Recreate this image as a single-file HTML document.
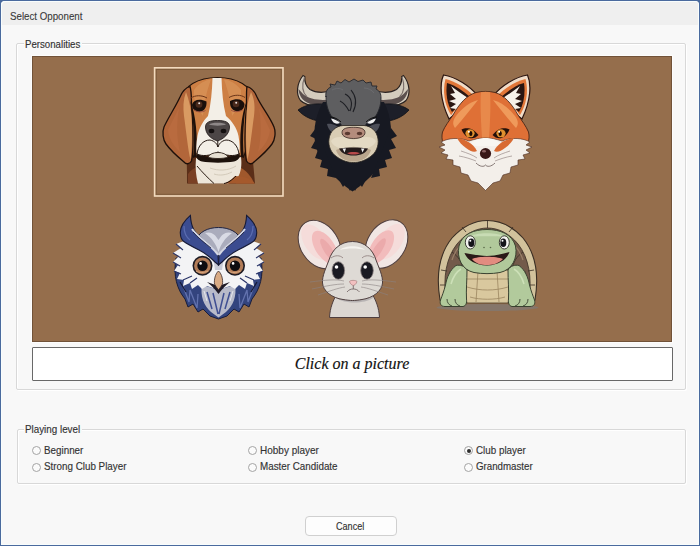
<!DOCTYPE html>
<html><head><meta charset="utf-8">
<style>
*{margin:0;padding:0;box-sizing:border-box}
html,body{width:700px;height:546px;overflow:hidden;background:#4a6a9e}
body{font-family:"Liberation Sans",sans-serif;position:relative}
.win{position:absolute;left:1px;top:1px;width:698px;height:544px;background:#f8f8f8;border-radius:4px 4px 0 0;overflow:hidden}
.title{position:absolute;left:0;top:0;width:698px;height:24px;background:#efefef}
.hl{position:absolute;left:0;top:0;width:698px;height:544px;border-radius:4px 4px 0 0;box-shadow:inset 1px 1px 0 #f8fdfd,inset -1px -1px 0 #f8fdfd}
.t{position:absolute;white-space:nowrap;color:#323232;-webkit-text-stroke:0.15px #323232;font-size:10.8px;line-height:13px;transform-origin:0 0;transform:scaleX(0.91)}
.gb{position:absolute;border:1px solid #d8d8d8;border-radius:2px;box-shadow:inset 1px 1px 0 #fff, 1px 1px 0 #fff}
.gl{position:absolute;background:#f8f8f8;height:10px;top:0}
.brown{position:absolute;left:32px;top:56px;width:640px;height:285.5px;background:#956e4c;box-shadow:inset 0 0 0 1px #715238,0 0 0 1px #fdfdfd}
.msg{position:absolute;left:31.5px;top:346.5px;width:641px;height:34px;background:#fff;border:1.2px solid #686868;border-radius:1px}
.msg span{position:absolute;left:0;right:0;top:7.3px;text-align:center;font-family:"Liberation Serif",serif;font-style:italic;font-size:16px;color:#111;-webkit-text-stroke:0.15px #111}
.radio{position:absolute;width:9px;height:9px;border:1px solid #a4a4a4;border-radius:50%;background:#fbfbfb}
.radio.on{border-color:#a0a0a0}
.radio.on::after{content:"";position:absolute;left:1.5px;top:1.5px;width:4px;height:4px;border-radius:50%;background:#2e2e2e}
.btn{position:absolute;left:305px;top:516px;width:92px;height:20px;border:1px solid #d0d0d0;border-radius:4px;background:#fdfdfd}
</style></head>
<body>
<div class="win">
  <div class="title"></div>
  <div class="hl"></div>
</div>
<div class="t" style="left:10px;top:10px;color:#383838;-webkit-text-stroke:0.1px #383838;transform:scaleX(0.9)">Select Opponent</div>

<div class="gb" style="left:16px;top:43px;width:670px;height:347px"></div>
<div class="gl" style="left:23.5px;top:38px;width:58.5px"></div>
<div class="t" style="left:25px;top:38px;transform:scaleX(0.895)">Personalities</div>
<div class="brown"></div>
<svg style="position:absolute;left:0;top:0" width="700" height="546" viewBox="0 0 700 546">
<g id="dog">
  <!-- neck back -->
  <path d="M186,150 C187,162 187,172 187,183.5 L255,183.5 C254,172 253,162 252,150 Z" fill="#5a2e18"/>
  <path d="M238,166 C246,170 252,177 254,183.5 L236,183.5 Z" fill="#a0582c"/>
  <path d="M188,174 C191,170 194,168 197,167 L198,183.5 L188,183.5 Z" fill="#7a4024"/>
  <!-- head dome -->
  <path d="M181,100 C183,86 198,77.5 217.5,77.5 C237,77.5 252,86 254,100 C254,120 250,140 244,156 L192,156 C186,140 181,120 181,100 Z" fill="#cd7f44" stroke="#22120a" stroke-width="1.1"/>
  <path d="M194,90 C199,83 206,80 211,79.5 C207,90 204,102 203,116 C198,110 193,100 194,90Z" fill="#dd9a60" opacity="0.55"/>
  <path d="M241,90 C236,83 229,80 224,79.5 C228,90 231,102 232,116 C237,110 242,100 241,90Z" fill="#dd9a60" opacity="0.55"/>
  <!-- ears -->
  <path d="M190,86.5 C185,88 182,92 180,97 C176,106 168,118 164,127 C162,132 163,140 166,144 C171,151 178,157 184,162 C186,164.5 189.5,164.5 191.5,161 C193.5,152 193.5,130 192,112 C191,102 192,92 190,86.5 Z" fill="#b2663a" stroke="#1e100a" stroke-width="1.3"/>
  <path d="M186,92 C189,100 191,108 191.5,118 C192.5,132 192,150 190.5,160 C188,150 186,130 184,116 C183,108 183,100 186,92Z" fill="#d99a62"/>
  <path d="M168,130 C172,122 176,114 179,108 C177,120 176,136 180,152 C174,146 169,140 168,130Z" fill="#c07248" opacity="0.45"/>
  <path d="M190,100 C193,115 195,138 193,158 L196,157 C198,138 196,115 190,100Z" fill="#1e100a"/>
  <path d="M247,86.5 C252,88 255,92 257,97 C261,106 270,117 274,127 C276,132 275,140 272,144 C267,151 260,157 254,162 C252,164.5 248.5,164.5 246.5,161 C244.5,152 244.5,130 246,112 C247,102 246,92 247,86.5 Z" fill="#b2663a" stroke="#1e100a" stroke-width="1.3"/>
  <path d="M251,92 C248,100 246.5,108 246.5,118 C245.5,132 246,150 247.5,160 C250,150 252,130 254,116 C255,108 255,100 251,92Z" fill="#d99a62"/>
  <path d="M270,130 C266,122 262,114 259,108 C261,120 262,136 258,152 C264,146 269,140 270,130Z" fill="#c07248" opacity="0.45"/>
  <path d="M247,100 C244,115 242,138 244,158 L241,157 C239,138 241,115 247,100Z" fill="#1e100a"/>
  <!-- chest -->
  <path d="M196,158 C206,161 230,161 241,157 C242,165 241,172 238,177 C235,181 231,183.5 226,183.5 L198,183.5 C196,176 195,168 196,158 Z" fill="#ede6da"/>
  <path d="M235,176 C244,176 252,179 255,183.5 L224,183.5 C229,182 232,179 235,176Z" fill="#a5592c"/>
  <path d="M236,176 C232,180 228,183 224,183.5" fill="none" stroke="#1e120c" stroke-width="1"/>
  <path d="M197,166 C202,172 208,178 214,183.5" fill="none" stroke="#2a1c14" stroke-width="1"/>
  <path d="M210,168 C218,171 228,171 236,166 M214,174 C220,176 226,175 232,172" fill="none" stroke="#cfc6b6" stroke-width="0.9"/>
  <!-- blaze/muzzle -->
  <path d="M212.5,78 L221.5,78 C222,92 223,104 226,116 C232,121 237,128 238.5,136 C240,144 240,150 239,155 L197,155 C196,150 196,144 197.5,136 C199,128 203,121 208,116 C211,104 212,92 212.5,78 Z" fill="#f3efe7"/>
  <!-- mouth band -->
  <path d="M196.5,153 C204,157 212,158.5 218,157.5 C225,158.5 232,157 239.5,153 C240.5,157 238.5,160.5 234,161.5 C226,163 210,163 202,161.5 C197.5,160.5 195.5,157 196.5,153Z" fill="#1c110b"/>
  <!-- jowls -->
  <path d="M197,154 C198,146 203,140 210,140 C215,141 217,144 218,147 C219,144 221,141 226,140 C233,140 238,146 239,154 C234,156.5 226,156 218,152 C210,156 202,156.5 197,154Z" fill="#f3efe7" stroke="#241812" stroke-width="1"/>
  <path d="M208,157 C211,151 225,151 228,157 C224,159 212,159 208,157Z" fill="#e6dfd2" stroke="#241812" stroke-width="0.8"/>
  <path d="M217.8,140 L217.8,147" stroke="#241812" stroke-width="1"/>
  <!-- nose -->
  <path d="M205.5,127 C205.5,122 210,120.5 217.5,120.5 C225,120.5 229.5,122 229.5,127 C229.5,134 223.5,139 217.5,141 C211,139 205.5,134 205.5,127 Z" fill="#4c4646" stroke="#1c1414" stroke-width="0.8"/>
  <path d="M209,124.5 C211,122 224,122 226,124.5 C222,126 213,126 209,124.5Z" fill="#8e8888"/>
  <ellipse cx="211.5" cy="131" rx="2.8" ry="2.2" fill="#141010"/>
  <ellipse cx="223.5" cy="131" rx="2.8" ry="2.2" fill="#141010"/>
  <!-- eyes -->
  <path d="M192,104.5 C193.5,99.5 200,98.5 206.5,101.5 C207,108 203.5,112 198.5,111.8 C194.5,111.5 192,108.5 192,104.5 Z" fill="#1a0f0b"/>
  <ellipse cx="199" cy="104.5" rx="3.4" ry="3.3" fill="#4a2a1c"/>
  <circle cx="199.2" cy="103.3" r="1" fill="#e8e0e0"/>
  <path d="M193.5,109.5 C197,112.5 202,112.5 205.5,110.5" fill="none" stroke="#9a5040" stroke-width="1"/>
  <path d="M244.5,104 C243,99 236.5,98 230,101 C229.5,107.5 233,111.5 238,111.3 C242,111 244.5,108 244.5,104 Z" fill="#1a0f0b"/>
  <ellipse cx="236" cy="104" rx="3.4" ry="3.3" fill="#4a2a1c"/>
  <circle cx="236.2" cy="102.8" r="1" fill="#e8e0e0"/>
  <path d="M231,110 C234.5,112.5 239.5,112 243,109.5" fill="none" stroke="#9a5040" stroke-width="1"/>
  <path d="M191,98 C195,95 202,95 207,98 M229,97.5 C234,94.5 241,94.5 245,97.5" fill="none" stroke="#6a3418" stroke-width="1"/>
</g>

<g id="bull">
  <!-- horns -->
  <path d="M303,75.5 C297,83 295.5,94 300.5,100.5 C305.5,105.5 316,106.5 326,105.5 L333,105 L333,90.5 C324,93 315,92.5 310,89.5 C305.5,86 304.5,81 304.8,76.5 Z" fill="#d4ccbd" stroke="#2a2220" stroke-width="1.2"/>
  <path d="M298.5,89 C299,97 304,103 313,104.5 C321,105.5 328,105 333,104 L333,99 C322,101 310,100 303,94 Z" fill="#5c504e"/>
  <path d="M304.5,77 C302,84 302,92 307,97" fill="none" stroke="#7a6e6a" stroke-width="1.1"/>
  <path d="M403.5,75.5 C409.5,83 411,94 406,100.5 C401,105.5 390.5,106.5 380.5,105.5 L373.5,105 L373.5,90.5 C382.5,93 391.5,92.5 396.5,89.5 C401,86 402,81 401.7,76.5 Z" fill="#d4ccbd" stroke="#2a2220" stroke-width="1.2"/>
  <path d="M408,89 C407.5,97 402.5,103 393.5,104.5 C385.5,105.5 378.5,105 373.5,104 L373.5,99 C384.5,101 396.5,100 403.5,94 Z" fill="#5c504e"/>
  <path d="M402,77 C404.5,84 404.5,92 399.5,97" fill="none" stroke="#7a6e6a" stroke-width="1.1"/>
  <!-- ears -->
  <path d="M327,104.5 C317,103 306,104 298,110 C304,117 314,121.5 327,122 Z" fill="#1d1f29" stroke="#0e1016" stroke-width="0.8"/>
  <path d="M380,104.5 C390,103 401,104 409,110 C403,117 393,121.5 380,122 Z" fill="#1d1f29" stroke="#0e1016" stroke-width="0.8"/>
  <!-- beard / lower face -->
  <path d="M323,102 C314,118 312,136 317,150 C322,164 333,178 352.5,191.5 C372,178 383,164 388,150 C393,136 392,118 384,102 Z" fill="#171922"/>
  <path d="M316,128 L310,136 L316,139 L311,148 L318,150 L315,158 L322,160 L320,167 L328,169 L327,176 L336,178 Z" fill="#171922"/>
  <path d="M391,128 L397,136 L391,139 L396,148 L389,150 L392,158 L385,160 L387,167 L379,169 L380,176 L371,178 Z" fill="#171922"/>
  <path d="M338,178 L343,187 L346,183 L350,191 L352.5,186 L355,191 L359,183 L362,187 L367,178 Z" fill="#171922"/>
  <!-- grey head -->
  <path d="M326,97 C325,91 328,88 331,87 L330,84 L335,85 L337,81 L341,83 L345,79.5 L349,82 L354,79 L358,81.5 L363,80 L366,83 L371,82 L372,86 L377,86 L376,89 C380,91 381,94 381,98 C381,106 378,113 375,117 C371,119 368,121 365,126 L342,126 C339,121 336,119 332,117 C329,113 326,106 326,96 Z" fill="#5e5e60" stroke="#26272c" stroke-width="0.9"/>
  <path d="M345,94 C351,97 353,103 350,111 M351,90 C356,96 357,104 353,112 M340,101 C344,103 347,107 349,111" fill="none" stroke="#1e1f24" stroke-width="1.1"/>
  <path d="M332,90 C336,88 340,88 343,90 M364,88 C368,88 372,90 374,93" fill="none" stroke="#6e6e72" stroke-width="0.8"/>
  <!-- eye patches -->
  <path d="M327,124 C332,123 338,126 342,130 L336,134 C331,133 328,129 327,124Z" fill="#4c4e58"/>
  <path d="M380,124 C375,123 369,126 365,130 L371,134 C376,133 379,129 380,124Z" fill="#4c4e58"/>
  <!-- eyes -->
  <path d="M331,118.5 C334,119 337.5,120.5 340,123 C336,124.5 333,123.5 331,118.5Z" fill="#efefef"/>
  <path d="M376,118.5 C373,119 369.5,120.5 367,123 C371,124.5 374,123.5 376,118.5Z" fill="#efefef"/>
  <path d="M330,117 C334,117 338,119 341,122 M377,117 C373,117 369,119 366,122" fill="none" stroke="#111" stroke-width="1"/>
  <!-- muzzle -->
  <path d="M343,125.5 C336,126 330,131 329,139 C328,146 331,153 337,157 C343,161 348,162.5 353.5,162.5 C359,162.5 364,161 370,157 C376,153 379,146 378,139 C377,131 371,126 364,125.5 Z" fill="#d9cdb4" stroke="#2a2420" stroke-width="0.8"/>
  <path d="M336,150 C342,147 365,147 371,150 C369,157 362,161.5 353.5,161.5 C345,161.5 338,157 336,150Z" fill="#b9a58c"/>
  <path d="M331,141 C334,136 343,136 353.5,140 C364,136 373,136 376,141 C374,146 368,149 362,148.5 C358,148 355,147 353.5,146 C352,147 349,148 345,148.5 C339,149 333,146 331,141Z" fill="#e4dac4"/>
  <!-- nose -->
  <path d="M342,132.5 C342,128.5 347,127.3 353.5,127.3 C360,127.3 365,128.5 365,132.5 C365,136.5 360,138.5 353.5,138.5 C347,138.5 342,136.5 342,132.5Z" fill="#b48c7c" stroke="#3a2a24" stroke-width="0.8"/>
  <ellipse cx="347.5" cy="133.5" rx="2.8" ry="1.7" fill="#5a3a30"/>
  <ellipse cx="359.5" cy="133.5" rx="2.8" ry="1.7" fill="#5a3a30"/>
  <!-- mouth -->
  <path d="M339,148.5 C346,147 361,147 368,148.5 C366,153 361,155.5 353.5,155.5 C346,155.5 341,153 339,148.5Z" fill="#231a1a"/>
  <path d="M347,153 C350,151.5 357,151.5 360,153 C357,155 350,155 347,153Z" fill="#b84a4a"/>
  <path d="M342.5,148.5 L344.5,152.5 L346,148.5Z M364.5,148.5 L362.5,152.5 L361,148.5Z" fill="#eeeeee"/>
</g>

<g id="fox">
  <!-- ears -->
  <path d="M443.5,75 C439.5,84 440,100 449,119 L478,96 C470,86 456,77 443.5,75Z" fill="#f0dcc8" stroke="#2a1410" stroke-width="1.2"/>
  <path d="M445.5,79 C442.5,90 444,104 451,115 L474,96 C466,88 455,81 445.5,79Z" fill="#e27638"/>
  <path d="M447,83 C445.5,93 447,104 452,112 L470,97 C463,91 455,85 447,83Z" fill="#2a1612"/>
  <path d="M451,86 C456,90 462,94 468,98 L472,96 L460,112 L452,114 L456,109 L450,108 L456,104 L449,101 L456,99 L450,94 L455,93Z" fill="#f6f1ea"/>
  <path d="M527.5,75 C531.5,84 531,100 522,119 L493,96 C501,86 515,77 527.5,75Z" fill="#f0dcc8" stroke="#2a1410" stroke-width="1.2"/>
  <path d="M525.5,79 C528.5,90 527,104 520,115 L497,96 C505,88 516,81 525.5,79Z" fill="#e27638"/>
  <path d="M524,83 C525.5,93 524,104 519,112 L501,97 C508,91 516,85 524,83Z" fill="#2a1612"/>
  <path d="M520,86 C515,90 509,94 503,98 L499,96 L511,112 L519,114 L515,109 L521,108 L515,104 L522,101 L515,99 L521,94 L516,93Z" fill="#f6f1ea"/>
  <!-- head -->
  <path d="M453,115 C459,104 467,95 476,92.5 C482,91 489,91 495,92.5 C504,95 512,104 518,115 C522,121 526,126 528.5,132 C529.5,136 529,140 528,143 C518,148 500,150 485.5,150 C471,150 453,148 443,143 C442,140 441.5,136 442.5,132 C445,126 449,121 453,115Z" fill="#df7036" stroke="#3a1c10" stroke-width="0.8"/>
  <path d="M481,92 C483.5,91.5 487.5,91.5 490,92 C491,105 490,125 488.5,145 L482.5,145 C481,125 480,105 481,92Z" fill="#ee9a5a" opacity="0.6"/>
  <path d="M456,116 C462,108 470,102 478,100 C470,110 462,120 455,128 C452,124 453,120 456,116Z" fill="#f4a868" opacity="0.75"/>
  <path d="M515,116 C509,108 501,102 493,100 C501,110 509,120 516,128 C519,124 518,120 515,116Z" fill="#f4a868" opacity="0.75"/>
  <!-- white lower face -->
  <path d="M441,142 C448,138 459,137 469,141 C475,139 480,138 485.5,138 C491,138 496,139 502,141 C512,137 523,138 530,142 L526,145 L532,147 L526,150 L530,153 L523,155 L525,159 L518,160 L518,165 L511,167 L510,173 L503,175 L500,181 L493,183 L485.5,190.5 L478,183 L471,181 L468,175 L461,173 L460,167 L453,165 L453,160 L446,159 L448,155 L441,153 L445,150 L439,147 L445,145 Z" fill="#f3efea" stroke="#4a2a20" stroke-width="0.6"/>
  <path d="M461,151 C467,153 473,155 477,158 M510,151 C504,153 498,155 494,158 M459,156 C465,157 471,159 476,161 M512,156 C506,157 500,159 495,161" fill="none" stroke="#8a7a78" stroke-width="0.6"/>
  <path d="M476,163 C480,167 484,167 485.5,165 C487,167 491,167 495,163" fill="none" stroke="#6a5a58" stroke-width="0.8"/>
  <path d="M470,144 C474,140 480,138 485.5,138 C491,138 497,140 501,144 C497,147 492,146 485.5,146 C479,146 474,147 470,144Z" fill="#f8f6f2"/>
  <path d="M457,138 C465,139 473,143 477,151 C474,153 470,151 466,148 C462,145 459,142 457,138Z" fill="#d86a32"/>
  <path d="M514,138 C506,139 498,143 494,151 C497,153 501,151 505,148 C509,145 512,142 514,138Z" fill="#d86a32"/>
  <!-- eyes -->
  <path d="M461.5,129.5 C466,127 473,127.5 478.5,135 C474,140 466,140 461.5,129.5Z" fill="#24100a"/>
  <ellipse cx="470" cy="133.3" rx="4.6" ry="4" fill="#e0902e"/>
  <ellipse cx="470.8" cy="133.5" rx="1.6" ry="2.6" fill="#1a0a04"/>
  <circle cx="468.8" cy="131.8" r="1" fill="#fff"/>
  <path d="M509.5,129.5 C505,127 498,127.5 492.5,135 C497,140 505,140 509.5,129.5Z" fill="#24100a"/>
  <ellipse cx="501" cy="133.3" rx="4.6" ry="4" fill="#e0902e"/>
  <ellipse cx="500.2" cy="133.5" rx="1.6" ry="2.6" fill="#1a0a04"/>
  <circle cx="499.2" cy="131.8" r="1" fill="#fff"/>
  <!-- nose -->
  <ellipse cx="485.5" cy="153.5" rx="5.6" ry="5.4" fill="#381818"/>
  <ellipse cx="484" cy="151.3" rx="2" ry="1.2" fill="#8a6262"/>
</g>

<g id="owl">
  <!-- blue body -->
  <path d="M176,258 C173,276 177,289 185,299 L188,307 L193,304 L198,312 L203,309 L210,316 L218.5,319 L227,316 L234,309 L239,312 L244,304 L249,307 L252,299 C260,289 264,276 261,258 Z" fill="#33447e" stroke="#181d3a" stroke-width="1"/>
  <path d="M183,286 L189,302 L190,290 L197,308 L198,294 M254,286 L248,302 L247,290 L240,308 L239,294" fill="none" stroke="#6272ae" stroke-width="1.3"/>
  <path d="M180,282 L186,292 M257,282 L251,292" stroke="#161a36" stroke-width="1.2"/>
  <!-- grey chest -->
  <path d="M202,285 C208,287 214,288 218.5,290 C223,288 229,287 235,285 C237,296 233,306 226,312 L218.5,317.5 L211,312 C204,306 200,296 202,285Z" fill="#b8bbca"/>
  <path d="M207,292 L212,309 M213,293 L218,314 M224,293 L219,314 M230,292 L225,309" fill="none" stroke="#3f4f92" stroke-width="1.5"/>
  <path d="M204,291 L207,301 M233,291 L230,301" stroke="#e6e8ee" stroke-width="1"/>
  <!-- head dome -->
  <path d="M196,241 C198,232 208,227.5 218.5,227.5 C229,227.5 239,232 241,241 L218.5,262 Z" fill="#aaacbc" stroke="#1e2240" stroke-width="1"/>
  <path d="M205,233 C212,238 216,244 218.5,252 C221,244 225,238 232,233 C226,231 222,234 218.5,240 C215,234 211,231 205,233Z" fill="#d9dbe5"/>
  <!-- white face (jagged) -->
  <path d="M184,241 L176,244 L181,248 L173,253 L179,256 L173,262 L178,265 L174,271 L180,273 L177,279 L184,280 L183,286 L190,283 L192,289 L198,285 L202,289 L207,286 L213,288 L218.5,284 L224,288 L230,286 L235,289 L239,285 L245,289 L247,283 L254,286 L253,280 L260,279 L257,273 L263,271 L259,265 L264,262 L258,256 L264,253 L256,248 L261,244 L253,241 C246,244 238,248 230,252 L218.5,260 L207,252 C199,248 191,244 184,241 Z" fill="#f3f3f5"/>
  <path d="M176,244 L183,250 M173,253 L181,258 M173,262 L180,266 M174,271 L181,274 M261,244 L254,250 M264,253 L256,258 M264,262 L257,266 M263,271 L256,274" stroke="#2a3468" stroke-width="1.1"/>
  <path d="M183,280 L192,276 M190,283 L197,278 M254,280 L245,276 M247,283 L240,278" stroke="#2a3468" stroke-width="1.2"/>
  <path d="M213,257 L218.5,262 L224,257 L222,270 L215,270Z" fill="#c8cad6"/>
  <!-- brows/tufts -->
  <path d="M190.4,215.3 C185,220 180,227 180.3,233 C180.5,237 182,240 183.2,241 C187,244 193,247 199,250 C205,253 210,257 215,262 L218.5,265 L218,255 C213,248 207,243 201,238 C195,233 191,228 190.4,215.3 Z" fill="#3b4c90" stroke="#161a36" stroke-width="1.1"/>
  <path d="M246.6,215.3 C252,220 257,227 256.7,233 C256.5,237 255,240 253.8,241 C250,244 244,247 238,250 C232,253 227,257 222,262 L218.5,265 L219,255 C224,248 230,243 236,238 C242,233 246,228 246.6,215.3 Z" fill="#3b4c90" stroke="#161a36" stroke-width="1.1"/>
  <path d="M192,229 C197,236 206,242 213,249 C215,251 217,253 218,255" fill="none" stroke="#d4d7e4" stroke-width="2"/>
  <path d="M245,229 C240,236 231,242 224,249 C222,251 220,253 219,255" fill="none" stroke="#d4d7e4" stroke-width="2"/>
  <path d="M193,232 C198,238 205,243 211,248" fill="none" stroke="#161a36" stroke-width="0.8"/>
  <path d="M244,232 C239,238 232,243 226,248" fill="none" stroke="#161a36" stroke-width="0.8"/>
  <path d="M184,226 C184,232 186,237 190,240" fill="none" stroke="#5a6cb0" stroke-width="1.2"/>
  <path d="M253,226 C253,232 251,237 247,240" fill="none" stroke="#5a6cb0" stroke-width="1.2"/>
  <!-- eyes -->
  <circle cx="202.5" cy="265.8" r="10" fill="#1c1a22"/>
  <circle cx="202.5" cy="265.8" r="8.4" fill="#b27c58"/>
  <circle cx="202.5" cy="265.8" r="5.2" fill="#0e0c10"/>
  <circle cx="200.6" cy="263.4" r="1.3" fill="#fff"/>
  <path d="M196,271 C199,273 204,273 208,271" fill="none" stroke="#d8a880" stroke-width="1"/>
  <circle cx="235" cy="265.8" r="10" fill="#1c1a22"/>
  <circle cx="235" cy="265.8" r="8.4" fill="#b27c58"/>
  <circle cx="235" cy="265.8" r="5.2" fill="#0e0c10"/>
  <circle cx="233.1" cy="263.4" r="1.3" fill="#fff"/>
  <path d="M228.5,271 C231.5,273 236.5,273 240.5,271" fill="none" stroke="#d8a880" stroke-width="1"/>
  <!-- beak -->
  <path d="M207,282 C211,285 215,289 218.5,294 C222,289 226,285 230,282 L218.5,286 Z" fill="#1e1a26"/>
  <path d="M218.5,271 C215,274 214,280 214.5,284 C216,287 218,289 218.5,290 C219,289 221,287 222.5,284 C223,280 222,274 218.5,271Z" fill="#d8aa84" stroke="#3a2a2a" stroke-width="0.8"/>
</g>

<g id="mouse">
  <!-- ears -->
  <ellipse cx="319.5" cy="244.5" rx="19" ry="26" transform="rotate(-33 319.5 244.5)" fill="#f1e6e3" stroke="#4e3e3e" stroke-width="1"/>
  <ellipse cx="315.5" cy="242" rx="11" ry="20" transform="rotate(-33 315.5 242)" fill="#f5dcda"/>
  <ellipse cx="325" cy="247.5" rx="9.5" ry="19" transform="rotate(-33 325 247.5)" fill="#f2bcbc"/>
  <ellipse cx="328" cy="250" rx="4" ry="13" transform="rotate(-33 328 250)" fill="#e8a2a4" opacity="0.7"/>
  <ellipse cx="386.5" cy="244" rx="19" ry="26" transform="rotate(33 386.5 244)" fill="#f1e6e3" stroke="#4e3e3e" stroke-width="1"/>
  <ellipse cx="390.5" cy="241.5" rx="11" ry="20" transform="rotate(33 390.5 241.5)" fill="#f5dcda"/>
  <ellipse cx="381" cy="247" rx="9.5" ry="19" transform="rotate(33 381 247)" fill="#f2bcbc"/>
  <ellipse cx="378" cy="249.5" rx="4" ry="13" transform="rotate(33 378 249.5)" fill="#e8a2a4" opacity="0.7"/>
  <!-- body -->
  <path d="M338,292 C333,300 330,308 329.5,317.5 L379.5,317.5 C379,308 376,300 371,292 Z" fill="#dcd7d2" stroke="#4e3e3e" stroke-width="1"/>
  <path d="M336,298 C345,304 364,304 373,298 L372,294 L337,294Z" fill="#b8b4b4"/>
  <!-- head -->
  <path d="M352.5,241.5 C340,241.5 332,250 329,260 C326,268 322,276 322.5,283 C323,291 332,298 343,299.5 C346,300 350,300.5 352.5,300.5 C355,300.5 359,300 362,299.5 C373,298 382,291 382.5,283 C383,276 379,268 376,260 C373,250 365,241.5 352.5,241.5 Z" fill="#dedad5" stroke="#4e3e3e" stroke-width="1"/>
  <path d="M340,250 C345,245 360,245 365,250 C358,248 347,248 340,250Z" fill="#f4f2ee"/>
  <!-- brows -->
  <path d="M331,258 C335,255 340,255 343,258 M374,258 C370,255 365,255 362,258" fill="none" stroke="#8a7a78" stroke-width="0.8"/>
  <!-- eyes -->
  <ellipse cx="338.3" cy="270.5" rx="6.3" ry="8.8" fill="#1a1a22" stroke="#8a8080" stroke-width="0.8"/>
  <circle cx="336.5" cy="267" r="1.8" fill="#fff"/>
  <ellipse cx="367" cy="270.5" rx="6.3" ry="8.8" fill="#1a1a22" stroke="#8a8080" stroke-width="0.8"/>
  <circle cx="365.2" cy="267" r="1.8" fill="#fff"/>
  <!-- nose & mouth -->
  <path d="M349.5,281.5 C350,280 356,280 357,281.5 C356.5,284 354,285.5 353.3,285.5 C352.5,285.5 350,284 349.5,281.5Z" fill="#f2c0c0" stroke="#a07070" stroke-width="0.6"/>
  <path d="M353.3,285.5 L353.3,289 M347,292 C349,289.5 351,289 353.3,289 C355.5,289 357.5,289.5 359.5,292" fill="none" stroke="#6a5a5a" stroke-width="0.8"/>
  <!-- whiskers -->
  <path d="M344,281 C336,279 326,280 310,282 M344,284 C336,284 326,286 312,289 M345,287 C338,288 330,291 318,295 M362,281 C370,279 380,280 396,282 M362,284 C370,284 380,286 394,289 M361,287 C368,288 376,291 388,295" fill="none" stroke="#8a8282" stroke-width="0.6"/>
</g>

<g id="turtle">
  <!-- shadow -->
  <ellipse cx="487.5" cy="307.5" rx="51" ry="3.4" fill="#85766a"/>
  <!-- shell -->
  <path d="M440,300 C436,276 439,254 452,238 C463,226 476,220.5 487.5,220.5 C499,220.5 512,226 523,238 C536,254 539,276 535,300 Z" fill="#d2c29c" stroke="#3a2e24" stroke-width="1.1"/>
  <path d="M446,298 C443,278 446,258 457,244 C466,233 477,228 487.5,228 C498,228 509,233 518,244 C529,258 532,278 529,298 Z" fill="#735a4a" stroke="#3a2e24" stroke-width="0.8"/>
  <path d="M452,252 C458,256 462,262 463,270 M449,272 L462,276 M448,288 L461,289 M523,252 C517,256 513,262 512,270 M526,272 L513,276 M527,288 L514,289" fill="none" stroke="#3a2e24" stroke-width="0.8"/>
  <path d="M452,260 C454,254 456,250 460,246 M523,260 C521,254 519,250 515,246" fill="none" stroke="#9a8068" stroke-width="1.2"/>
  <path d="M441,270 L447,271 M440,285 L446,285 M534,270 L528,271 M535,285 L529,285 M462,227 L466,232 M513,227 L509,232 M487.5,220.5 L487.5,228" stroke="#3a2e24" stroke-width="0.8"/>
  <!-- belly -->
  <path d="M465,270 L510,270 C512,282 511,294 508,303 L467,303 C464,294 463,282 465,270Z" fill="#d9c89e" stroke="#4a3c2c" stroke-width="0.8"/>
  <path d="M467,287 C480,291 495,291 508,287 M478,271 L476,302 M497,271 L499,302 M465,279 L510,279 M470,297 C480,300 495,300 505,297" fill="none" stroke="#9a8560" stroke-width="0.8"/>
  <!-- legs -->
  <path d="M456,265.5 C450,270 447,277 445.5,285 C444,291 442,296 440.5,300 C439.5,304 441,306.5 445,306.5 L463,306.5 C466,306 467,303 466.5,299 C466,290 467,280 467,270 C465,266 460,264.5 456,265.5 Z" fill="#b2ca9c" stroke="#3a4230" stroke-width="1"/>
  <path d="M451,284 C453,277 456,272 461,269" fill="none" stroke="#cde0b8" stroke-width="1.5"/>
  <path d="M447,299 C447,303 449,305 452,306 M455,299 C455,303 457,305 460,306" fill="none" stroke="#3a4230" stroke-width="0.9"/>
  <path d="M519,265.5 C525,270 528,277 529.5,285 C531,291 533,296 534.5,300 C535.5,304 534,306.5 530,306.5 L512,306.5 C509,306 508,303 508.5,299 C509,290 508,280 508,270 C510,266 515,264.5 519,265.5 Z" fill="#b2ca9c" stroke="#3a4230" stroke-width="1"/>
  <path d="M524,284 C522,277 519,272 514,269" fill="none" stroke="#cde0b8" stroke-width="1.5"/>
  <path d="M528,299 C528,303 526,305 523,306 M520,299 C520,303 518,305 515,306" fill="none" stroke="#3a4230" stroke-width="0.9"/>
  <!-- head -->
  <path d="M487,229.5 C500,229.5 512,234 515.5,246 C518,258 512,270 500,272.5 C492,274 482,274 474,272.5 C462,270 456.5,258 459,246 C462,234 474,229.5 487,229.5Z" fill="#b1c99b" stroke="#3a4230" stroke-width="1"/>
  <path d="M468,237 C476,232 498,232 506,237 C498,236 476,236 468,237Z" fill="#c8dcb4"/>
  <!-- eyes -->
  <ellipse cx="470.3" cy="242.4" rx="5" ry="6.6" fill="#f4f4f0" stroke="#2a2a24" stroke-width="0.9"/>
  <ellipse cx="471.3" cy="242.8" rx="3" ry="4.3" fill="#14141a"/>
  <circle cx="470.3" cy="240.8" r="1" fill="#fff"/>
  <ellipse cx="504.3" cy="242.4" rx="5" ry="6.6" fill="#f4f4f0" stroke="#2a2a24" stroke-width="0.9"/>
  <ellipse cx="503.3" cy="242.8" rx="3" ry="4.3" fill="#14141a"/>
  <circle cx="502.5" cy="240.8" r="1" fill="#fff"/>
  <circle cx="484" cy="247.5" r="0.8" fill="#5a6a4a"/>
  <circle cx="490.5" cy="247.5" r="0.8" fill="#5a6a4a"/>
  <!-- mouth -->
  <path d="M464.5,253 C472,254 480,256 487,256 C494,256 502,254 509.5,252 C507,259 500,265 487,265.5 C475,265 467,260 464.5,253Z" fill="#2a1a18"/>
  <path d="M472,259 C478,256 496,256 503,259 C498,264 492,265 487,265 C481,265 476,264 472,259Z" fill="#e28c80"/>
</g>

<rect x="156.3" y="69.5" width="125" height="124.8" fill="none" stroke="#7e5c3c" stroke-width="1"/>
<rect x="154.6" y="67.8" width="128.4" height="128.2" fill="none" stroke="#f3dbbf" stroke-width="1.6"/>


</svg>
<div class="msg"><span>Click on a picture</span></div>

<div class="gb" style="left:17px;top:429px;width:669px;height:55px"></div>
<div class="gl" style="left:23.5px;top:423px;width:58.5px"></div>
<div class="t" style="left:25px;top:423px">Playing level</div>

<div class="radio" style="left:32.3px;top:446px"></div><div class="t" style="left:44px;top:444px">Beginner</div>
<div class="radio" style="left:32.3px;top:462.5px"></div><div class="t" style="left:44px;top:460px">Strong Club Player</div>
<div class="radio" style="left:248.2px;top:446px"></div><div class="t" style="left:260px;top:444px;transform:scaleX(0.925)">Hobby player</div>
<div class="radio" style="left:248.2px;top:462.5px"></div><div class="t" style="left:260px;top:460px">Master Candidate</div>
<div class="radio on" style="left:464.2px;top:446px"></div><div class="t" style="left:476px;top:444px">Club player</div>
<div class="radio" style="left:464.2px;top:462.5px"></div><div class="t" style="left:476px;top:460px;transform:scaleX(0.9)">Grandmaster</div>

<div class="btn"></div>
<div class="t" style="left:336px;top:519.5px;transform:scaleX(0.84)">Cancel</div>
</body></html>
